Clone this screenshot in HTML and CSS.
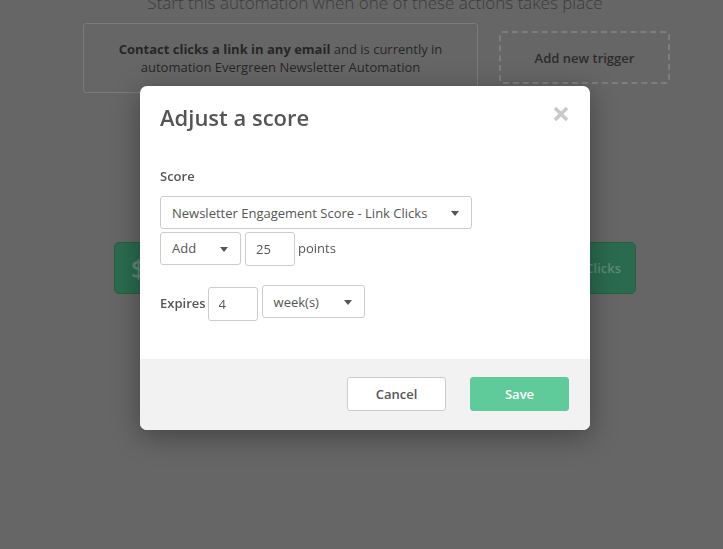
FILE: index.html
```html
<!DOCTYPE html>
<html lang="en">
<head>
  <meta charset="UTF-8">
  <title>Adjust a score</title>
  <link rel="stylesheet" href="styles.css">
</head>
<body>

  <div class="page">
    <h2 class="lead">Start this automation when one of these actions takes place</h2>

    <div class="triggers">
      <div class="trigger">
        <p><b>Contact clicks a link in any email</b> and is currently in automation Evergreen Newsletter Automation</p>
      </div>
      <div class="trigger trigger-new">Add new trigger</div>
    </div>

    <div class="action">
      <span class="action-icon">$</span>
      <span class="action-text">Adjust score Newsletter Engagement Score - Link Clicks</span>
    </div>
  </div>

  <div class="modal">
    <div class="modal-body">
      <h1 class="modal-title">Adjust a score</h1>
      <button class="close" type="button" aria-label="Close">
        <svg width="16" height="16" viewBox="0 0 16 16">
          <path d="M2 2 L14 14 M14 2 L2 14" stroke="#c9c9c9" stroke-width="3.4" stroke-linecap="butt"/>
        </svg>
      </button>

      <label class="label">Score</label>
      <div class="select select-wide">Newsletter Engagement Score - Link Clicks</div>

      <div class="row">
        <div class="select select-op">Add</div>
        <input class="field" type="text" value="25">
        <span class="unit">points</span>
      </div>

      <div class="row row-expires">
        <span class="label-inline">Expires</span>
        <input class="field" type="text" value="4">
        <div class="select select-period">week(s)</div>
      </div>
    </div>

    <div class="modal-footer">
      <button class="btn btn-cancel" type="button">Cancel</button>
      <button class="btn btn-save" type="button">Save</button>
    </div>
  </div>

</body>
</html>
```

FILE: styles.css
```css
html {
  font-size: 13px;
}

body {
  margin: 0;
  background-color: #666666;
  font-family: 'Open Sans', 'Noto Sans', Arial, sans-serif;
  color: #555555;
  overflow: hidden;
}

/* page behind the dialog (already dimmed) */
.page {
  width: 600px;
  margin-left: 75px;
}

.lead {
  margin: -9px 0 0;
  font-size: 17px;
  font-weight: 300;
  line-height: 24px;
  text-align: center;
  color: #3b3b3b;
}

.triggers {
  display: flex;
  align-items: flex-start;
  gap: 21px;
  margin-top: 8px;
  padding-left: 8px;
}

.trigger {
  box-sizing: border-box;
  width: 395px;
  height: 70px;
  display: flex;
  align-items: center;
  justify-content: center;
  border: 1px solid #7b7b7b;
  border-radius: 3px;
  color: #262626;
  text-align: center;
  line-height: 18px;
}

.trigger p {
  margin: 0;
  padding: 0 20px;
}

.trigger b {
  font-weight: 700;
}

.trigger-new {
  width: 171px;
  height: 53px;
  margin-top: 8px;
  border: 2px dashed #7d7d7d;
  font-weight: 600;
  color: #2c2c2c;
}

.action {
  box-sizing: border-box;
  width: 522px;
  height: 52px;
  margin: 149px 0 0 39px;
  padding: 0 14px 0 16px;
  display: flex;
  align-items: center;
  justify-content: space-between;
  background-color: #2a6b4f;
  border: 1px solid #24603f;
  border-radius: 5px;
  color: #5c8a76;
}

.action-icon {
  font-size: 26px;
  font-weight: 600;
}

.action-text {
  font-weight: 600;
}

/* dialog */
.modal {
  position: fixed;
  top: 86px;
  left: 140px;
  width: 450px;
  background-color: #ffffff;
  border-radius: 7px;
  box-shadow: 0 6px 28px rgba(0, 0, 0, 0.35);
  overflow: hidden;
}

.modal-body {
  position: relative;
  padding: 16px 20px 38px;
}

.modal-title {
  margin: 0;
  font-size: 22px;
  font-weight: 600;
  line-height: 30px;
  color: #555555;
}

.close {
  position: absolute;
  top: 20px;
  right: 21px;
  padding: 0;
  border: 0;
  background: none;
  line-height: 0;
}

.label {
  display: block;
  margin-top: 35px;
  font-weight: 600;
  line-height: 18px;
}

.select {
  box-sizing: border-box;
  position: relative;
  height: 33px;
  padding: 0 30px 0 11px;
  display: flex;
  align-items: center;
  border: 1px solid #cccccc;
  border-radius: 3px;
  background-color: #ffffff;
}

.select::after {
  content: "";
  position: absolute;
  top: 14px;
  right: 12px;
  border-left: 4px solid transparent;
  border-right: 4px solid transparent;
  border-top: 5px solid #555555;
}

.select-wide {
  width: 312px;
  margin-top: 11px;
}

.row {
  display: flex;
  align-items: center;
  gap: 4px;
  margin-top: 1px;
}

.select-op {
  width: 81px;
}

.field {
  box-sizing: border-box;
  width: 50px;
  height: 34px;
  margin: 0;
  padding: 0 0 0 10px;
  border: 1px solid #cccccc;
  border-radius: 3px;
  font: inherit;
  color: #555555;
}

.row .field {
  margin-top: 2px;
}

.unit {
  margin-left: -1px;
}

.row-expires {
  margin-top: 19px;
}

.label-inline {
  font-weight: 600;
  margin-right: -2px;
}

.row-expires .select {
  align-self: flex-start;
}

.select-period {
  width: 103px;
  padding-left: 11px;
}

.modal-footer {
  display: flex;
  justify-content: flex-end;
  gap: 24px;
  padding: 18px 21px 19px;
  background-color: #f2f2f2;
}

.btn {
  box-sizing: border-box;
  width: 99px;
  height: 34px;
  border-radius: 3px;
  font: inherit;
  font-weight: 600;
}

.btn-cancel {
  background-color: #ffffff;
  border: 1px solid #cccccc;
  color: #555555;
}

.btn-save {
  background-color: #5fca9a;
  border: 1px solid #5fca9a;
  color: #ffffff;
}
```
